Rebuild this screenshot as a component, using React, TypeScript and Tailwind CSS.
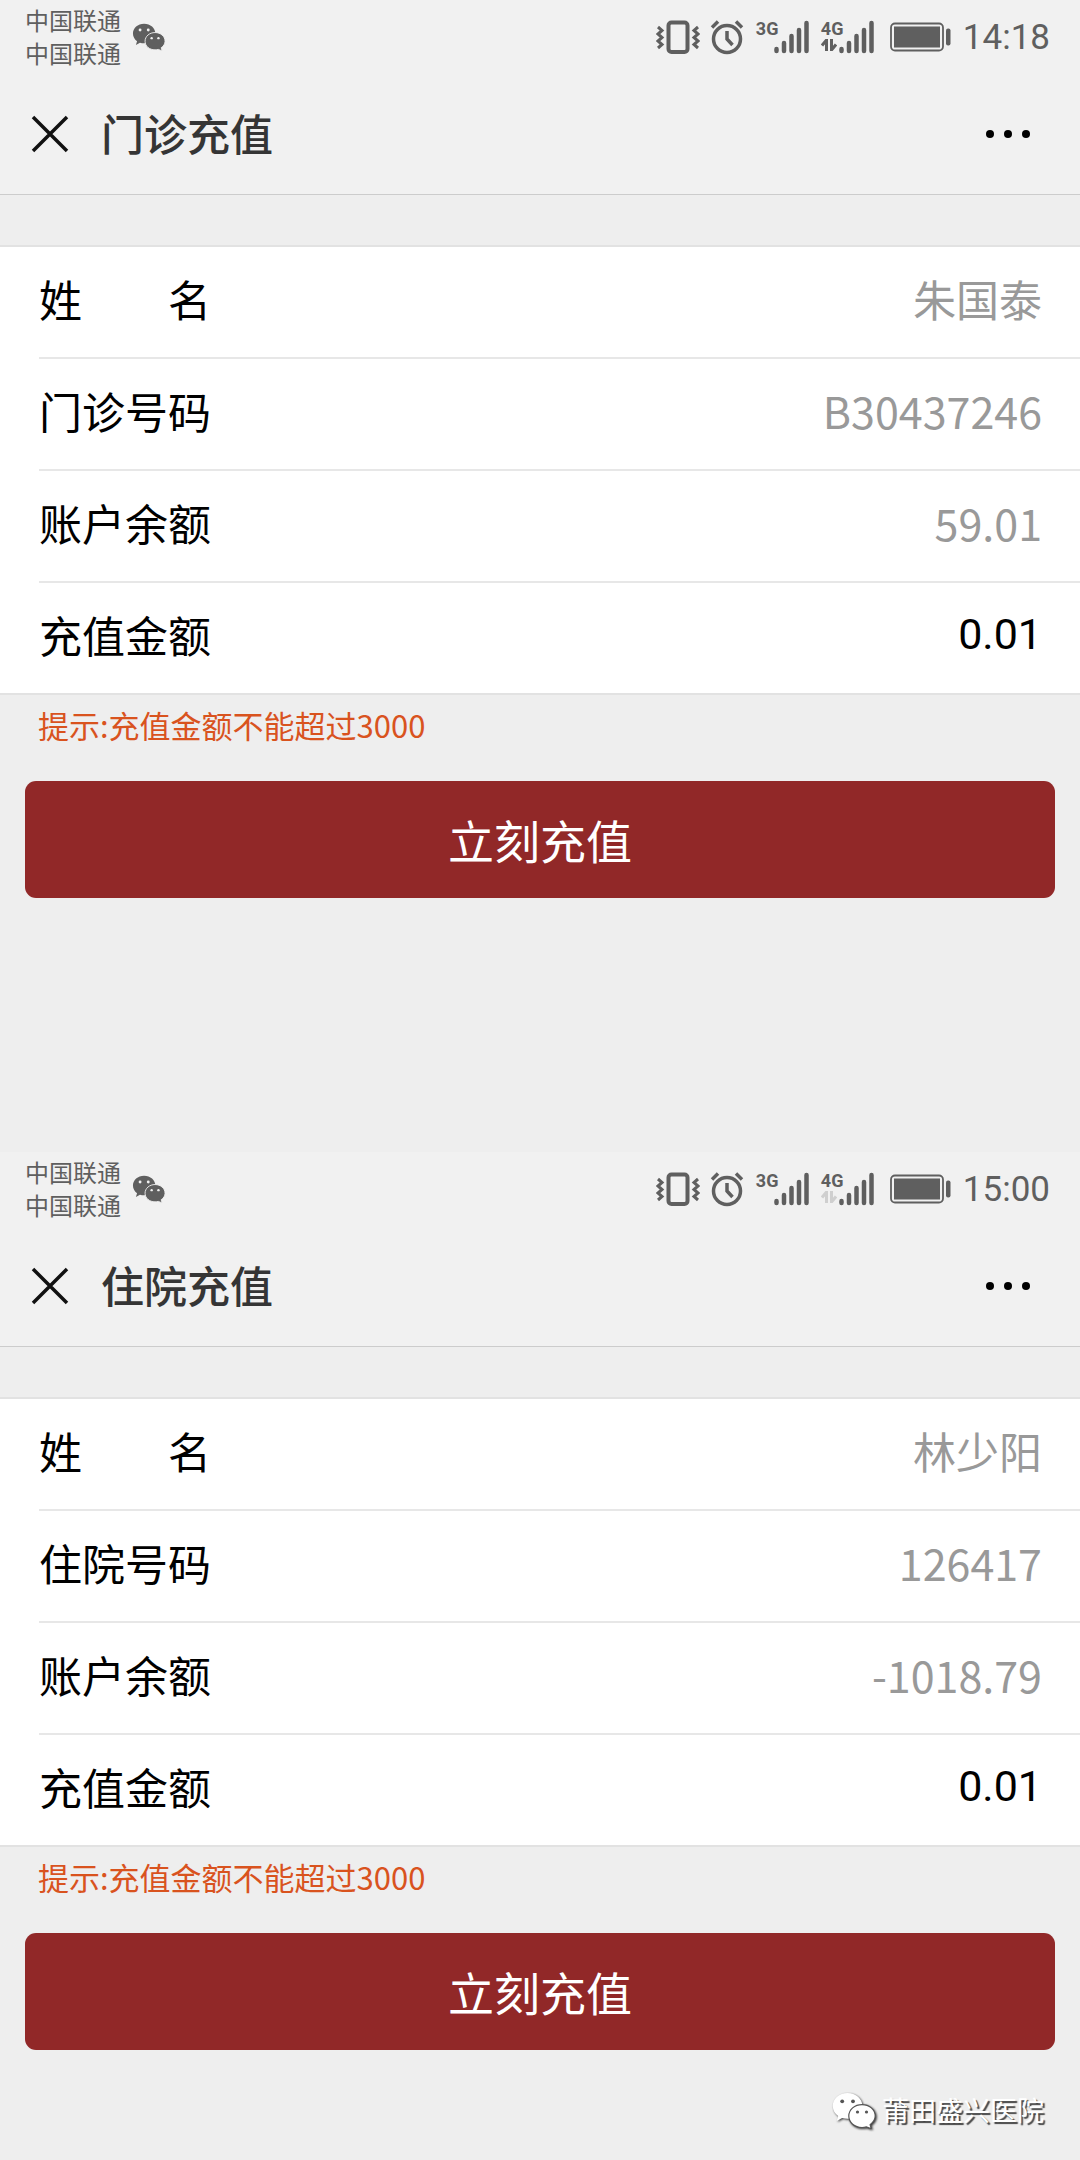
import { useState } from 'react';

type Field = { label: string; value: string };

type ScreenProps = {
  id: string;
  title: string;
  time: string;
  dataActive: boolean;
  fields: Field[];
};

const outpatient: ScreenProps = {
  id: 'outpatient',
  title: '门诊充值',
  time: '14:18',
  dataActive: true,
  fields: [
    { label: '姓　　名', value: '朱国泰' },
    { label: '门诊号码', value: 'B30437246' },
    { label: '账户余额', value: '59.01' },
  ],
};

const inpatient: ScreenProps = {
  id: 'inpatient',
  title: '住院充值',
  time: '15:00',
  dataActive: false,
  fields: [
    { label: '姓　　名', value: '林少阳' },
    { label: '住院号码', value: '126417' },
    { label: '账户余额', value: '-1018.79' },
  ],
};

function ChatBubbles({ className, eye, gap }: { className: string; eye: string; gap: string }) {
  return (
    <svg viewBox="0 0 44 37" className={className} fill="currentColor" aria-hidden="true">
      <path d="M15.5 1C7.2 1 .8 6.700.8 13.900c0 4.200 2 7.700 5.400 10.100L4.700 29l5.400-2.900c1.800.5 3.500.7 5.400.7 8.300 0 14.900-5.700 14.900-12.900S23.800 1 15.500 1z" />
      <path
        d="M30 12.600c-7.400 0-13.200 5-13.200 11.500S22.600 35.500 30 35.500c1.500 0 3-.2 4.400-.6l5 2-1.300-4.200c3.200-2.200 5.100-5.100 5.100-8.600 0-6.500-5.900-11.500-13.200-11.500z"
        stroke={gap}
        strokeWidth="1.200"
      />
      <g fill={eye}>
        <circle cx="10.200" cy="9.300" r="1.900" />
        <circle cx="21" cy="9.300" r="1.900" />
        <circle cx="25.500" cy="20" r="1.600" />
        <circle cx="34.500" cy="20" r="1.600" />
      </g>
    </svg>
  );
}

function VibrateIcon() {
  return (
    <svg viewBox="0 0 44 36" className="h-9 w-11" fill="none" stroke="currentColor" strokeWidth="4" aria-hidden="true">
      <rect x="12.500" y="3.500" width="19" height="29.500" rx="3" />
      <path strokeWidth="3" d="M2 8l4 3.500-4 3.500 4 3.500-4 3.500 4 3.500-4 3.500M42 8l-4 3.500 4 3.500-4 3.500 4 3.500-4 3.500 4 3.500" />
    </svg>
  );
}

function AlarmIcon() {
  return (
    <svg viewBox="0 0 34 36" className="h-9 w-[34px]" fill="none" stroke="currentColor" strokeWidth="3.500" aria-hidden="true">
      <circle cx="17" cy="20" r="13.500" />
      <path d="M17 12v8l5.500 6M2 8.500l6-6M26 2.500l6 6" />
    </svg>
  );
}

function SignalIcon({ network, arrows }: { network: string; arrows?: string }) {
  return (
    <span className="flex">
      <span className="flex h-9 w-[18px] flex-col">
        <span className="font-[Roboto,sans-serif] text-[18px] leading-[20px] font-bold">{network}</span>
        {arrows && (
          <svg viewBox="0 0 16 12" className={arrows} fill="none" stroke="currentColor" strokeWidth="3" aria-hidden="true">
            <path d="M5.500 12V1L1 6.500M10.500 0v11l4.500-5.500" />
          </svg>
        )}
      </span>
      <svg viewBox="0 0 35 36" className="h-9 w-[35px]" stroke="currentColor" strokeWidth="4.500" strokeLinecap="round" aria-hidden="true">
        <path d="M2.500 30v2M10 24v8M17.500 17v15M25 11v21M32.500 4v28" />
      </svg>
    </span>
  );
}

function BatteryIcon() {
  return (
    <svg viewBox="0 0 62 36" className="h-9 w-[62px]" aria-hidden="true">
      <rect x="1" y="4.500" width="52" height="27" rx="4" fill="none" stroke="currentColor" strokeWidth="1.800" />
      <rect x="4" y="7.500" width="46" height="21" fill="currentColor" />
      <rect x="56" y="9.500" width="4.500" height="17" rx="2" fill="currentColor" />
    </svg>
  );
}

function StatusBar({ time, dataActive }: { time: string; dataActive: boolean }) {
  return (
    <div className="flex h-[74px] items-center justify-between pr-[30px] pl-[25px] text-[#5f5f5f]">
      <div className="flex items-center gap-[11px]">
        <div className="pb-[3px] text-[24px] leading-[33px]">
          <p>中国联通</p>
          <p>中国联通</p>
        </div>
        <ChatBubbles className="h-7 w-[34px]" eye="#f1f1f1" gap="#f1f1f1" />
      </div>
      <div className="flex items-center">
        <VibrateIcon />
        <span className="ml-[10px]">
          <AlarmIcon />
        </span>
        <span className="ml-3">
          <SignalIcon network="3G" />
        </span>
        <span className="ml-3">
          <SignalIcon network="4G" arrows={dataActive ? 'h-3 w-4' : 'h-3 w-4 text-[#cfcfcf]'} />
        </span>
        <span className="ml-4">
          <BatteryIcon />
        </span>
        <time className="ml-[11px] pt-[2px] font-[Roboto,sans-serif] text-[35px] leading-9">{time}</time>
      </div>
    </div>
  );
}

function TitleBar({ title }: { title: string }) {
  return (
    <div className="flex h-[121px] items-center border-b border-[#cccccc] pr-[49px] pl-[31px]">
      <button type="button" aria-label="关闭" className="text-[#111111]">
        <svg viewBox="0 0 38 38" className="h-[38px] w-[38px]" stroke="currentColor" strokeWidth="3.500">
          <path d="M2 2l34 34M36 2L2 36" />
        </svg>
      </button>
      <h1 className="ml-8 pb-1 text-[43px] leading-[60px] font-medium text-[#353535]">{title}</h1>
      <button type="button" aria-label="更多" className="ml-auto text-black">
        <svg viewBox="0 0 46 10" className="h-[10px] w-[46px]" fill="currentColor">
          <circle cx="5" cy="5" r="4" />
          <circle cx="23" cy="5" r="4" />
          <circle cx="41" cy="5" r="4" />
        </svg>
      </button>
    </div>
  );
}

function RechargeScreen({ id, title, time, dataActive, fields }: ScreenProps) {
  const [amount, setAmount] = useState('0.01');

  return (
    <section>
      <header className="bg-[#f1f1f1]">
        <StatusBar time={time} dataActive={dataActive} />
        <TitleBar title={title} />
      </header>
      <form onSubmit={(e) => e.preventDefault()}>
        <div className="mt-[50px] border-y-2 border-[#e2e2e2] bg-white pl-[39px] text-[43px] leading-[60px]">
          {fields.map((field, i) => (
            <div key={field.label} className="flex h-28 items-center justify-between border-b-2 border-[#e7e7e7] pr-[38px] pb-2">
              <label htmlFor={`${id}-${i}`} className="text-black">
                {field.label}
              </label>
              <output id={`${id}-${i}`} className="text-[#999999]">
                {field.value}
              </output>
            </div>
          ))}
          <div className="flex h-[110px] items-center justify-between gap-6 pr-[38px] pb-2">
            <label htmlFor={`${id}-amount`} className="shrink-0 text-black">
              充值金额
            </label>
            <input
              id={`${id}-amount`}
              inputMode="decimal"
              value={amount}
              onChange={(e) => setAmount(e.target.value)}
              className="min-w-0 flex-1 text-right font-[Roboto,sans-serif] text-black outline-none"
            />
          </div>
        </div>
        <p className="pl-[38px] text-[31px] leading-[60px] text-[#d9531e]">提示:充值金额不能超过3000</p>
        <div className="mt-[26px] px-[25px]">
          <button type="submit" className="h-[117px] w-full rounded-[11px] bg-[#912828] text-[46px] text-white">
            立刻充值
          </button>
        </div>
      </form>
    </section>
  );
}

export default function App() {
  return (
    <div className="min-h-screen bg-[#eeeeee] font-['Noto_Sans_CJK_SC',sans-serif]">
      <RechargeScreen {...outpatient} />
      <div className="mt-[254px]">
        <RechargeScreen {...inpatient} />
      </div>
      <footer className="mt-10 flex items-center justify-end gap-1.5 pr-9 text-white">
        <ChatBubbles className="h-[37px] w-11 drop-shadow-[1px_1px_1px_#333333]" eye="#555555" gap="#555555" />
        <span className="text-[27px] leading-10 text-shadow-[2px_2px_1px_#444444]">莆田盛兴医院</span>
      </footer>
    </div>
  );
}
